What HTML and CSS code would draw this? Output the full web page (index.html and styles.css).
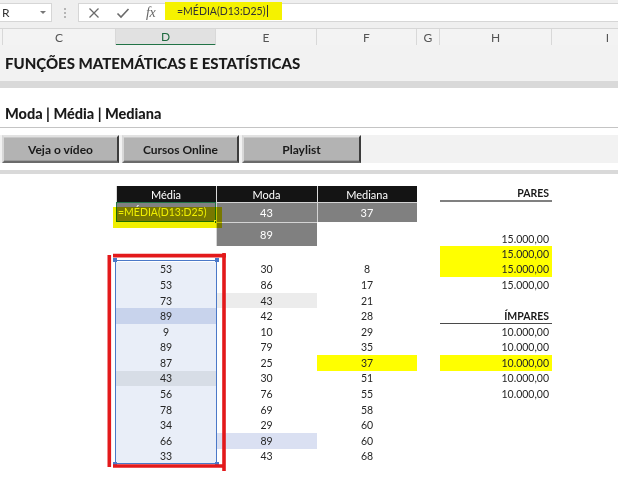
FILE: index.html
```html
<!DOCTYPE html>
<html lang="pt">
<head>
<meta charset="utf-8">
<title>Funções Matemáticas e Estatísticas</title>
<link rel="stylesheet" href="styles.css">
</head>
<body>
<div class="toolbar">
  <div class="namebox"><span>R</span><span class="caret"></span></div>
  <div class="grip"><i></i><i></i><i></i></div>
  <div class="fxbox">
    <svg class="ico" width="12" height="12" viewBox="0 0 12 12"><path d="M1.5 1.5 L10.5 10.5 M10.5 1.5 L1.5 10.5" stroke="#6a6a6a" stroke-width="1.3" fill="none"/></svg>
    <svg class="ico" width="14" height="12" viewBox="0 0 14 12"><path d="M1.5 6.5 L5 10 L12.5 2" stroke="#6a6a6a" stroke-width="1.6" fill="none"/></svg>
    <span class="fx">fx</span>
  </div>
  <div class="formula"><span class="hl">=MÉDIA(D13:D25)<span class="cursor"></span></span></div>
</div>

<div class="colhdr">
  <div></div><div>C</div><div class="sel">D</div><div>E</div><div>F</div><div>G</div><div>H</div><div>I</div>
</div>

<div class="title">FUNÇÕES MATEMÁTICAS E ESTATÍSTICAS</div>
<div class="band"></div>
<div class="subtitle">Moda | Média | Mediana</div>
<div class="btnrow">
  <div class="btn">Veja o vídeo</div>
  <div class="btn">Cursos Online</div>
  <div class="btn">Playlist</div>
</div>
<div class="band thin"></div>

<div class="sheet">
  <div class="row r-top"></div>
  <div class="row r-hd">
    <div></div><div></div><div class="hd">Média</div><div class="hd">Moda</div><div class="hd">Mediana</div><div></div><div class="rt b pares">PARES</div>
  </div>
  <div class="row r-2">
    <div></div><div></div><div class="g edit">=MÉDIA(D13:D25)<span class="ghandle"></span></div><div class="g">43</div><div class="g">37</div><div></div><div></div>
  </div>
  <div class="row r-3">
    <div></div><div></div><div></div><div class="g">89</div><div></div><div></div><div class="rt bot">15.000,00</div>
  </div>
  <div class="row r">
    <div></div><div></div><div></div><div></div><div></div><div></div><div class="rt y">15.000,00</div>
  </div>
  <div class="row r"><div></div><div></div><div class="s">53</div><div>30</div><div>8</div><div></div><div class="rt y">15.000,00</div></div>
  <div class="row r"><div></div><div></div><div class="s">53</div><div>86</div><div>17</div><div></div><div class="rt">15.000,00</div></div>
  <div class="row r"><div></div><div></div><div class="s">73</div><div class="lg">43</div><div>21</div><div></div><div></div></div>
  <div class="row r"><div></div><div></div><div class="s s-dark">89</div><div>42</div><div>28</div><div></div><div class="rt b impares">ÍMPARES</div></div>
  <div class="row r"><div></div><div></div><div class="s">9</div><div>10</div><div>29</div><div></div><div class="rt">10.000,00</div></div>
  <div class="row r"><div></div><div></div><div class="s">89</div><div>79</div><div>35</div><div></div><div class="rt">10.000,00</div></div>
  <div class="row r"><div></div><div></div><div class="s">87</div><div>25</div><div class="y">37</div><div></div><div class="rt y">10.000,00</div></div>
  <div class="row r"><div></div><div></div><div class="s s-gray">43</div><div>30</div><div>51</div><div></div><div class="rt">10.000,00</div></div>
  <div class="row r"><div></div><div></div><div class="s">56</div><div>76</div><div>55</div><div></div><div class="rt">10.000,00</div></div>
  <div class="row r"><div></div><div></div><div class="s">78</div><div>69</div><div>58</div><div></div><div></div></div>
  <div class="row r"><div></div><div></div><div class="s">34</div><div>29</div><div>60</div><div></div><div></div></div>
  <div class="row r"><div></div><div></div><div class="s">66</div><div class="lb">89</div><div>60</div><div></div><div></div></div>
  <div class="row r"><div></div><div></div><div class="s">33</div><div>43</div><div>68</div><div></div><div></div></div>

  <div class="marker"></div>
  <div class="selection"><span class="h tl"></span><span class="h tr"></span><span class="h bl"></span><span class="h br"></span></div>
  <svg class="annot" width="618" height="307" viewBox="0 0 618 307">
    <g stroke="#e3191b" stroke-width="3.6" fill="none" stroke-linecap="butt">
      <path d="M109.3 81 V293"/>
      <path d="M113 81.6 H226"/>
      <path d="M224 79 V297"/>
      <path d="M113 292 H223"/>
    </g>
  </svg>
</div>
</body>
</html>
```

FILE: styles.css
```css
* { box-sizing: border-box; }
html, body { margin: 0; padding: 0; }
body {
  width: 618px;
  height: 481px;
  overflow: hidden;
  background: #fff;
  font-family: Lato, "Liberation Sans", sans-serif;
  color: #262626;
}

/* formula toolbar */
.toolbar {
  height: 29px;
  background: #efefef;
  border-bottom: 1px solid #d6d6d6;
  display: flex;
  align-items: flex-start;
  padding-top: 3px;
}
.namebox {
  width: 52px;
  height: 19px;
  background: #fff;
  border: 1px solid #d6d6d6;
  border-left: none;
  display: flex;
  align-items: center;
  justify-content: space-between;
  padding: 0 5px 0 2px;
  font-size: 12px;
  color: #333;
}
.caret {
  width: 0; height: 0;
  border-left: 3px solid transparent;
  border-right: 3px solid transparent;
  border-top: 3px solid #777;
}
.grip {
  width: 26px;
  height: 19px;
  display: flex;
  flex-direction: column;
  align-items: center;
  justify-content: center;
  gap: 2px;
}
.grip i { width: 2px; height: 2px; background: #b5b5b5; display: block; }
.fxbox {
  width: 87px;
  height: 19px;
  background: #fff;
  border: 1px solid #d6d6d6;
  border-right: none;
  display: flex;
  align-items: center;
  justify-content: flex-start;
  gap: 16px;
  padding-left: 9px;
}
.fx {
  font-family: "Liberation Serif", serif;
  font-style: italic;
  font-size: 14px;
  color: #666;
  letter-spacing: -0.5px;
}
.formula {
  flex: 1;
  height: 19px;
  background: #fff;
  border-top: 1px solid #d6d6d6;
  border-bottom: 1px solid #d6d6d6;
  display: flex;
}
.hl {
  width: 117px;
  height: 18px;
  margin-top: -2px;
  background: #f5f200;
  font-size: 10.5px;
  color: #333;
  padding-left: 12px;
  display: flex;
  align-items: center;
}
.cursor { width: 1px; height: 12px; background: #333; margin-left: 1px; }

/* column headers */
.colhdr {
  display: grid;
  grid-template-columns: 3px 113px 100px 101px 100px 23px 112px 112px;
  height: 16px;
  background: #f3f3f3;
  overflow: hidden;
}
.colhdr div {
  border-right: 1px solid #d8d8d8;
  display: flex;
  align-items: center;
  justify-content: center;
  font-size: 12px;
  color: #555;
}
.colhdr .sel {
  background: #e1e1e1;
  border-bottom: 2px solid #217346;
  color: #1f6a3f;
}

/* title bands */
.title {
  height: 36px;
  background: #f2f2f2;
  display: flex;
  align-items: center;
  padding-left: 5px;
  font-weight: 900;
  font-size: 15px;
  color: #1a1a1a;
}
.band { height: 7px; background: #d9d9d9; }
.band.thin { height: 4px; margin-top: 7px; }
.subtitle {
  height: 40px;
  border-bottom: 1px solid #c4c4c4;
  display: flex;
  align-items: flex-end;
  padding: 0 0 5px 5px;
  font-weight: 900;
  font-size: 14.5px;
  color: #1a1a1a;
}
.btnrow {
  margin-top: 7px;
  height: 28px;
  background: #f2f2f2;
  display: flex;
  gap: 3px;
  padding-left: 2px;
}
.btn {
  width: 117px;
  height: 28px;
  background: #b3b3b3;
  border-top: 2px solid #e2e2e2;
  border-left: 2px solid #d8d8d8;
  border-right: 2px solid #3c3c3c;
  border-bottom: 2px solid #6a6a6a;
  box-shadow: inset 0 1px 0 #c8c8c8, inset 0 -1px 0 #9a9a9a;
  display: flex;
  align-items: center;
  justify-content: center;
  font-weight: 700;
  font-size: 12px;
  color: #1a1a1a;
}
.btn:last-child { width: 119px; }

/* sheet grid */
.sheet { position: relative; }
.row {
  display: grid;
  grid-template-columns: 3px 113px 100px 101px 100px 23px 112px;
}
.r-top { height: 12px; }
.r-hd { height: 16px; }
.r-2 { height: 20px; }
.r-3 { height: 24px; }
.r { height: 15.58px; }
.row > div {
  display: flex;
  align-items: center;
  justify-content: center;
  font-size: 10.5px;
  color: #262626;
  position: relative;
}
.row > .rt { justify-content: flex-end; padding-right: 3px; }
.row > .bot { align-items: flex-end; padding-bottom: 1px; }
.row > .b { font-weight: 700; color: #1a1a1a; }
.pares { border-bottom: 2px solid #808080; }
.impares { border-bottom: 1px solid #4a4a4a; }
.row > .hd {
  background: #141414;
  color: #fff;
  font-size: 11px;
  box-shadow: inset 1px 0 0 #d9d9d9;
}
.row > .g {
  background: #808080;
  color: #fff;
  font-size: 11px;
  box-shadow: inset 1px 0 0 #d4d4d4, inset 0 1px 0 #d4d4d4;
}
.row > .edit {
  justify-content: flex-start;
  padding-left: 2px;
  font-size: 10.5px;
  box-shadow: inset 0 0 0 1px #217346;
}
.ghandle {
  position: absolute;
  right: -2px;
  bottom: -2px;
  width: 4px;
  height: 4px;
  background: #217346;
  border: 1px solid #fff;
}
.row > .y { background: #ffff00; }
.row > .lg { background: #ececec; }
.row > .lb { background: #dae0f2; }
.row > .s { background: #e9eef8; }
.row > .s-dark { background: #c8d3ec; }
.row > .s-gray { background: #d7dde6; }

/* overlays */
.marker {
  position: absolute;
  left: 113px;
  top: 33px;
  width: 109px;
  height: 21px;
  background: #f0ef00;
  mix-blend-mode: multiply;
}
.selection {
  position: absolute;
  left: 115px;
  top: 86px;
  width: 102px;
  height: 204px;
  border: 1.5px solid #4a78c8;
}
.h {
  position: absolute;
  width: 4px;
  height: 4px;
  background: #4a78c8;
}
.tl { left: -3px; top: -3px; }
.tr { right: -3px; top: -3px; }
.bl { left: -3px; bottom: -3px; }
.br { right: -3px; bottom: -3px; }
.annot {
  position: absolute;
  left: 0;
  top: 0;
  pointer-events: none;
}
```
